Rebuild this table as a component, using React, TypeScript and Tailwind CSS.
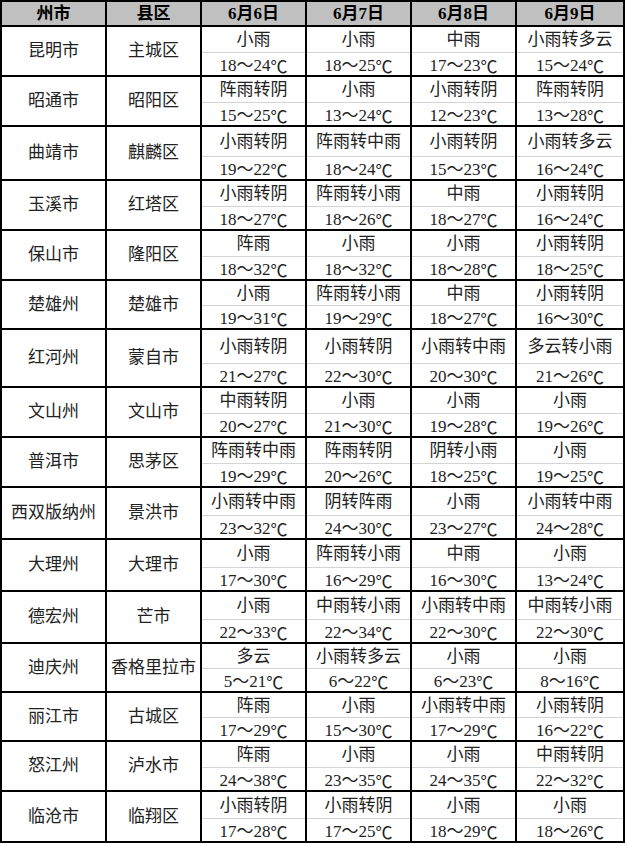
type Day = [string, string]

type Row = {
  city: string
  county: string
  h: string
  days: Day[]
}

const rows: Row[] = [
  { city: '昆明市', county: '主城区', h: 'h-[50px]', days: [['小雨', '18～24'], ['小雨', '18～25'], ['中雨', '17～23'], ['小雨转多云', '15～24']] },
  { city: '昭通市', county: '昭阳区', h: 'h-[50px]', days: [['阵雨转阴', '15～25'], ['小雨', '13～24'], ['小雨转阴', '12～23'], ['阵雨转阴', '13～28']] },
  { city: '曲靖市', county: '麒麟区', h: 'h-[54px]', days: [['小雨转阴', '19～22'], ['阵雨转中雨', '18～24'], ['小雨转阴', '15～23'], ['小雨转多云', '16～24']] },
  { city: '玉溪市', county: '红塔区', h: 'h-[50px]', days: [['小雨转阴', '18～27'], ['阵雨转小雨', '18～26'], ['中雨', '18～27'], ['小雨转阴', '16～24']] },
  { city: '保山市', county: '隆阳区', h: 'h-[50px]', days: [['阵雨', '18～32'], ['小雨', '18～32'], ['小雨', '18～28'], ['小雨转阴', '18～25']] },
  { city: '楚雄州', county: '楚雄市', h: 'h-[49px]', days: [['小雨', '19～31'], ['阵雨转小雨', '19～29'], ['中雨', '18～27'], ['小雨转阴', '16～30']] },
  { city: '红河州', county: '蒙自市', h: 'h-[58px]', days: [['小雨转阴', '21～27'], ['小雨转阴', '22～30'], ['小雨转中雨', '20～30'], ['多云转小雨', '21～26']] },
  { city: '文山州', county: '文山市', h: 'h-[50px]', days: [['中雨转阴', '20～27'], ['小雨', '21～30'], ['小雨', '19～28'], ['小雨', '19～26']] },
  { city: '普洱市', county: '思茅区', h: 'h-[50px]', days: [['阵雨转中雨', '19～29'], ['阵雨转阴', '20～26'], ['阴转小雨', '18～25'], ['小雨', '19～25']] },
  { city: '西双版纳州', county: '景洪市', h: 'h-[52px]', days: [['小雨转中雨', '23～32'], ['阴转阵雨', '24～30'], ['小雨', '23～27'], ['小雨转中雨', '24～28']] },
  { city: '大理州', county: '大理市', h: 'h-[52px]', days: [['小雨', '17～30'], ['阵雨转小雨', '16～29'], ['中雨', '16～30'], ['小雨', '13～24']] },
  { city: '德宏州', county: '芒市', h: 'h-[52px]', days: [['小雨', '22～33'], ['中雨转小雨', '22～34'], ['小雨转中雨', '22～30'], ['中雨转小雨', '22～30']] },
  { city: '迪庆州', county: '香格里拉市', h: 'h-[49px]', days: [['多云', '5～21'], ['小雨转多云', '6～22'], ['小雨', '6～23'], ['小雨', '8～16']] },
  { city: '丽江市', county: '古城区', h: 'h-[49px]', days: [['阵雨', '17～29'], ['小雨', '15～30'], ['小雨转中雨', '17～29'], ['小雨转阴', '16～22']] },
  { city: '怒江州', county: '泸水市', h: 'h-[50px]', days: [['阵雨', '24～38'], ['小雨', '23～35'], ['小雨', '24～35'], ['中雨转阴', '22～32']] },
  { city: '临沧市', county: '临翔区', h: 'h-[51px]', days: [['小雨转阴', '17～28'], ['小雨转阴', '17～25'], ['小雨', '18～29'], ['小雨', '18～26']] },
]

const dayWidths = ['w-[105px]', 'w-[105px]', 'w-[105px]', 'w-[108px]']
const headers = ['6月6日', '6月7日', '6月8日', '6月9日']

function DayCell({ day, w }: { day: Day; w: string }) {
  return (
    <div className={`${w} flex flex-col border-r-2 border-black`}>
      <div className="flex-1 flex items-center justify-center leading-none">{day[0]}</div>
      <div className="h-[23px] flex items-center justify-center pt-[3px] border-t border-[#d4d4d4] leading-none">
        {day[1]}
        <span className="inline-block w-[17px] text-center font-['Noto_Sans_CJK_SC']">℃</span>
      </div>
    </div>
  )
}

export default function App() {
  return (
    <div
      className="w-[625px] bg-white text-[#222] text-[17px] whitespace-nowrap"
      style={{ fontFamily: '"Liberation Serif", "Noto Sans CJK SC", serif' }}
    >
      <div className="border-t-2 border-l-2 border-black">
        <div className="flex h-[25px] bg-[#c0c0c0] border-b-2 border-black font-bold text-black">
          <div className="w-[105px] flex items-center justify-center border-r-2 border-black">州市</div>
          <div className="w-[95px] flex items-center justify-center border-r-2 border-black">县区</div>
          {headers.map((t, i) => (
            <div key={t} className={`${dayWidths[i]} flex items-center justify-center border-r-2 border-black`}>
              {t}
            </div>
          ))}
        </div>
        {rows.map((r) => (
          <div key={r.city} className={`flex ${r.h} border-b-2 border-black`}>
            <div className="w-[105px] flex items-center justify-center border-r-2 border-black">{r.city}</div>
            <div className="w-[95px] flex items-center justify-center border-r-2 border-black">{r.county}</div>
            {r.days.map((d, i) => (
              <DayCell key={i} day={d} w={dayWidths[i]} />
            ))}
          </div>
        ))}
      </div>
    </div>
  )
}
